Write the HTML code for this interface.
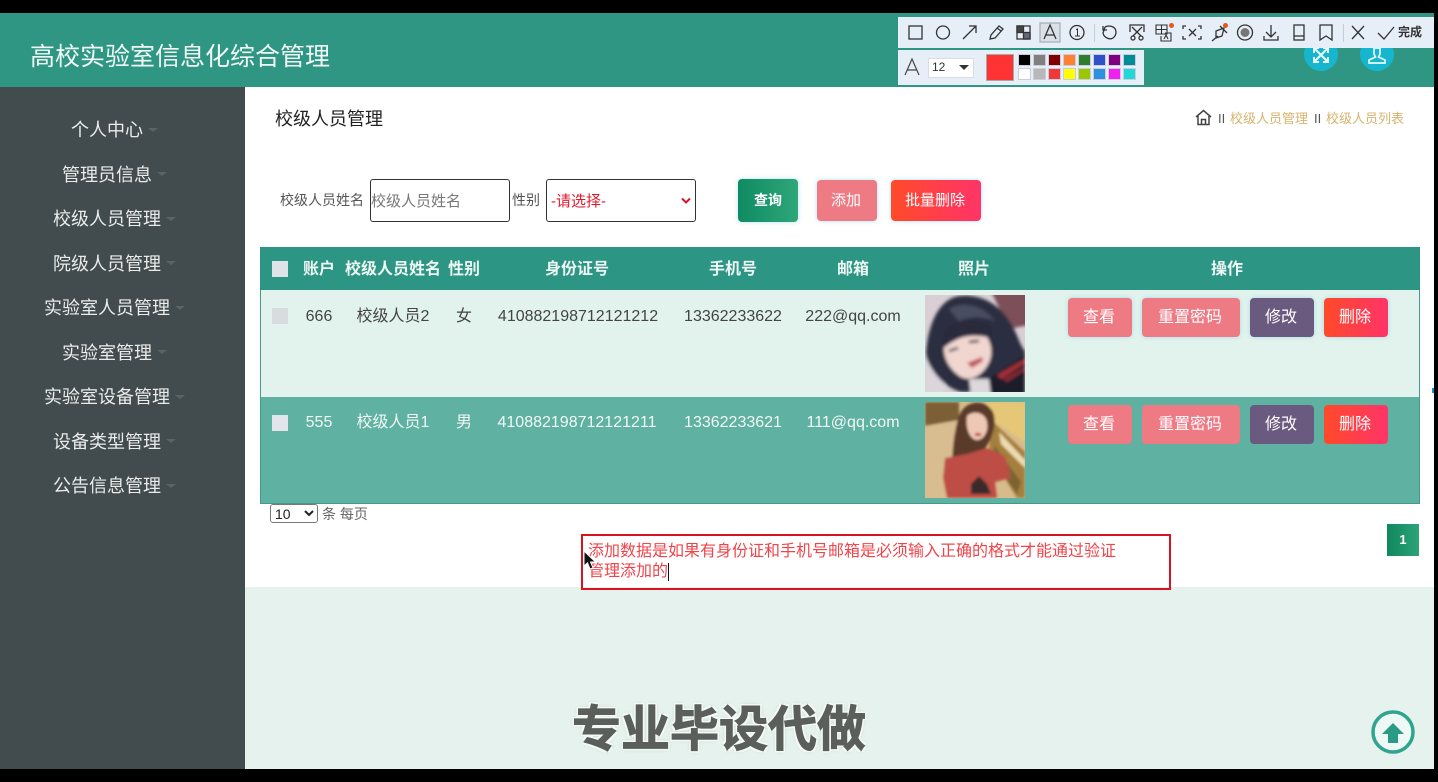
<!DOCTYPE html>
<html lang="zh">
<head>
<meta charset="utf-8">
<title>高校实验室信息化综合管理</title>
<style>
html{background:#000}
html,body{margin:0;padding:0;width:1438px;height:782px;overflow:hidden}
body{position:relative;background:#000;font-family:"Liberation Sans","Noto Sans CJK SC",sans-serif;filter:blur(.35px)}
.a{position:absolute;display:block}
.t{position:absolute;white-space:nowrap;text-align:center;transform:translateX(-50%)}
.l{position:absolute;white-space:nowrap}
.menu{font-size:18px;color:#e9ecea;line-height:24px}
.car{position:absolute;width:0;height:0;border-left:5px solid transparent;border-right:5px solid transparent;border-top:4px solid #5a6366}
.th{font-size:16px;font-weight:bold;color:#eef7f4;line-height:22px;top:259px}
.d1{font-size:16px;color:#444;line-height:22px;top:306px}
.d2{font-size:16px;color:#f2f8f6;line-height:22px;top:412px}
.btn{position:absolute;height:39px;box-sizing:border-box;padding-right:2px;border-radius:4px;color:#fff;font-size:16px;line-height:40px;text-align:center;box-shadow:0 0 5px rgba(120,200,230,.55)}
.pk{background:#ee7a84}.pu{background:#6b5a80}.re{background:linear-gradient(90deg,#ff4a2a,#ff3468)}
.sw{position:absolute;width:13px;height:12px;box-sizing:border-box;border:1px solid #ccd}
</style>
</head>
<body>
<div class="a" style="left:0;top:13px;width:1434px;height:756px;background:#e5f2ed"></div>
<div class="a" style="left:0;top:13px;width:1434px;height:74px;background:#2e9683"></div>
<div class="l" style="left:30px;top:40px;font-size:25px;line-height:34px;color:#f1f8f6">高校实验室信息化综合管理</div>

<div class="a" style="left:0;top:87px;width:245px;height:682px;background:#424b4e"></div>
<div class="a" style="left:245px;top:87px;width:1189px;height:500px;background:#fff"></div>

<div class="t menu" style="left:107px;top:118px">个人中心</div><i class="car" style="left:148px;top:128px"></i>
<div class="t menu" style="left:107px;top:163px">管理员信息</div><i class="car" style="left:157px;top:172px"></i>
<div class="t menu" style="left:107px;top:207px">校级人员管理</div><i class="car" style="left:166px;top:217px"></i>
<div class="t menu" style="left:107px;top:252px">院级人员管理</div><i class="car" style="left:166px;top:261px"></i>
<div class="t menu" style="left:107px;top:296px">实验室人员管理</div><i class="car" style="left:175px;top:306px"></i>
<div class="t menu" style="left:107px;top:341px">实验室管理</div><i class="car" style="left:157px;top:350px"></i>
<div class="t menu" style="left:107px;top:385px">实验室设备管理</div><i class="car" style="left:175px;top:395px"></i>
<div class="t menu" style="left:107px;top:430px">设备类型管理</div><i class="car" style="left:166px;top:439px"></i>
<div class="t menu" style="left:107px;top:474px">公告信息管理</div><i class="car" style="left:166px;top:484px"></i>

<div class="l" style="left:275px;top:107px;font-size:18px;line-height:24px;color:#222">校级人员管理</div>

<svg class="a" style="left:1195px;top:109px" width="17" height="17" viewBox="0 0 17 17" fill="none" stroke="#444" stroke-width="1.500"><path d="M1 8 8.500 1.500 16 8M3 7V15.500H14V7M6.500 15.500V10.500H10.500V15.500"/></svg>
<div class="l" style="left:1218px;top:110px;font-size:13px;line-height:17px;color:#555">II</div>
<div class="l" style="left:1230px;top:110px;font-size:13px;line-height:17px;color:#d8b36c">校级人员管理</div>
<div class="l" style="left:1314px;top:110px;font-size:13px;line-height:17px;color:#555">II</div>
<div class="l" style="left:1326px;top:110px;font-size:13px;line-height:17px;color:#d8b36c">校级人员列表</div>

<div class="l" style="left:280px;top:190px;font-size:14px;line-height:20px;color:#555">校级人员姓名</div>
<div class="a" style="left:370px;top:179px;width:140px;height:43px;box-sizing:border-box;border:1px solid #333;border-radius:3px;background:#fff"></div>
<div class="l" style="left:371px;top:191px;font-size:15px;line-height:21px;color:#777">校级人员姓名</div>
<div class="l" style="left:512px;top:190px;font-size:14px;line-height:20px;color:#555">性别</div>
<div class="a" style="left:546px;top:179px;width:150px;height:43px;box-sizing:border-box;border:1px solid #333;border-radius:3px;background:#fff"></div>
<div class="l" style="left:551px;top:191px;font-size:15px;line-height:21px;color:#e3192c">-请选择-</div>
<svg class="a" style="left:681px;top:197px" width="10" height="8" viewBox="0 0 10 8" fill="none" stroke="#d81525" stroke-width="2"><path d="M1 1.500 5 5.500 9 1.500"/></svg>

<div class="btn" style="left:738px;top:179px;width:60px;height:43px;line-height:43px;font-size:14px;font-weight:bold;padding:0;background:linear-gradient(90deg,#0f8a62,#2ea779)">查询</div>
<div class="btn" style="left:817px;top:180px;width:60px;height:41px;line-height:41px;font-size:15px;padding-right:2px;background:#ee7a84">添加</div>
<div class="btn" style="left:891px;top:180px;width:90px;height:41px;line-height:41px;font-size:15px;padding-right:2px;background:linear-gradient(90deg,#ff4a2a,#ff3468)">批量删除</div>

<!-- table -->
<div class="a" style="left:260px;top:247px;width:1160px;height:43px;background:#2d9583"></div>
<div class="a" style="left:260px;top:290px;width:1160px;height:107px;box-sizing:border-box;background:#e2f3ed;border:1px solid #3d9c8a;border-top:0;border-bottom:0"></div>
<div class="a" style="left:260px;top:397px;width:1160px;height:107px;box-sizing:border-box;background:#5fb1a1;border:1px solid #3d9c8a;border-top:0"></div>

<div class="a" style="left:272px;top:261px;width:16px;height:16px;background:#dfe3e6"></div>
<div class="t th" style="left:319px">账户</div>
<div class="t th" style="left:393px">校级人员姓名</div>
<div class="t th" style="left:464px">性别</div>
<div class="t th" style="left:577px">身份证号</div>
<div class="t th" style="left:733px">手机号</div>
<div class="t th" style="left:853px">邮箱</div>
<div class="t th" style="left:974px">照片</div>
<div class="t th" style="left:1227px">操作</div>

<div class="a" style="left:272px;top:308px;width:16px;height:16px;background:#d8dcdf"></div>
<div class="t d1" style="left:319px">666</div>
<div class="t d1" style="left:393px">校级人员2</div>
<div class="t d1" style="left:464px">女</div>
<div class="t d1" style="left:578px">410882198712121212</div>
<div class="t d1" style="left:733px">13362233622</div>
<div class="t d1" style="left:853px">222@qq.com</div>

<div class="a" style="left:272px;top:415px;width:16px;height:16px;background:#e2e6e8"></div>
<div class="t d2" style="left:319px">555</div>
<div class="t d2" style="left:393px">校级人员1</div>
<div class="t d2" style="left:464px">男</div>
<div class="t d2" style="left:577px">410882198712121211</div>
<div class="t d2" style="left:733px">13362233621</div>
<div class="t d2" style="left:853px">111@qq.com</div>

<!-- photo 1 -->
<svg class="a" style="left:925px;top:295px" width="100" height="97" viewBox="0 0 100 97">
<defs><filter id="b1" x="-10%" y="-10%" width="120%" height="120%"><feGaussianBlur stdDeviation="1.500"/></filter><clipPath id="c1"><rect width="100" height="97"/></clipPath></defs>
<g clip-path="url(#c1)">
<rect width="100" height="97" fill="#d9cfd4"/>
<g filter="url(#b1)">
<path d="M66 -4H104V30L84 34Z" fill="#7d5058"/>
<path d="M0 60H20V100H0Z" fill="#dcd6dc"/>
<path d="M1 62C2 30 14 4 34 1 58-2 78 12 88 32 94 44 96 52 100 56V70L74 90 56 97H36C20 92 8 80 1 62Z" fill="#2b2e40"/>
<path d="M24 14C38 6 58 10 70 26 62 22 46 20 34 26Z" fill="#4a4d62"/>
<path d="M60 97 63 84 100 60V100H60Z" fill="#1d1e29"/>
<path d="M72 80 100 64V68L76 84Z" fill="#a83038"/>
<path d="M78 84 100 72V75L82 87Z" fill="#8a2a32"/>
<path d="M44 84H64L66 100H46Z" fill="#ddd8dc"/>
<path d="M19 52C26 44 44 38 62 42 68 52 68 64 60 74 54 82 44 86 36 82 26 76 18 64 19 52Z" fill="#f1d6d0"/>
<path d="M17 54 19 36C30 24 50 22 64 30 68 34 68 40 66 44 52 36 34 40 17 54Z" fill="#2a2c3c"/>
<path d="M42 68 57 62 58 66 47 73Z" fill="#c2555e"/>
<path d="M24 56l9-3M44 47l10-1" stroke="#2c2c34" stroke-width="2.400" fill="none"/>
</g></g></svg>
<!-- photo 2 -->
<svg class="a" style="left:925px;top:402px" width="100" height="96" viewBox="0 0 100 96">
<defs><filter id="b2" x="-10%" y="-10%" width="120%" height="120%"><feGaussianBlur stdDeviation="1.400"/></filter><clipPath id="c2"><rect width="100" height="96"/></clipPath></defs>
<g clip-path="url(#c2)">
<rect width="100" height="96" fill="#d7bb8a"/>
<g filter="url(#b2)">
<path d="M0 0H34V18L0 24Z" fill="#7c5f36"/>
<path d="M0 24 36 18V96H0Z" fill="#d8bd90"/>
<path d="M62 0H100V40L70 20Z" fill="#e6c778"/>
<path d="M66 18 100 50V96H92L64 50Z" fill="#a57f3e"/>
<path d="M74 30 100 58V66L76 42Z" fill="#ecdcb0"/>
<path d="M70 44 96 80 92 92 66 56Z" fill="#7d6433"/>
<path d="M34 14C40-2 60-4 68 10 72 20 68 32 64 40L58 50 36 78 28 76C26 58 28 32 34 14Z" fill="#5a3a2a"/>
<path d="M42 14C48 8 60 10 62 20 64 30 58 38 52 38 46 38 40 28 42 14Z" fill="#eec8b4"/>
<path d="M50 31h6v3h-6z" fill="#c13c3c"/>
<path d="M20 56 42 52 62 46 80 54 86 76 70 80 72 96H22L18 76Z" fill="#bd4e44"/>
<path d="M46 82 54 74 62 82 66 92H46Z" fill="#3b2b29"/>
</g></g></svg>

<!-- action buttons -->
<div class="btn pk" style="left:1068px;top:298px;width:64px">查看</div>
<div class="btn pk" style="left:1142px;top:298px;width:98px">重置密码</div>
<div class="btn pu" style="left:1250px;top:298px;width:64px">修改</div>
<div class="btn re" style="left:1324px;top:298px;width:64px">删除</div>
<div class="btn pk" style="left:1068px;top:405px;width:64px;box-shadow:none">查看</div>
<div class="btn pk" style="left:1142px;top:405px;width:98px;box-shadow:none">重置密码</div>
<div class="btn pu" style="left:1250px;top:405px;width:64px;box-shadow:none">修改</div>
<div class="btn re" style="left:1324px;top:405px;width:64px;box-shadow:none">删除</div>

<!-- page size -->
<div class="a" style="left:270px;top:504px;width:48px;height:19px;box-sizing:border-box;border:1px solid #777;border-radius:3px;background:#fff"></div>
<div class="l" style="left:275px;top:505px;font-size:14px;line-height:18px;color:#222">10</div>
<svg class="a" style="left:304px;top:510px" width="10" height="7" viewBox="0 0 10 7" fill="none" stroke="#222" stroke-width="2"><path d="M1 1 5 5 9 1"/></svg>
<div class="l" style="left:322px;top:505px;font-size:14px;line-height:18px;color:#666">条 每页</div>

<div class="a" style="left:1387px;top:524px;width:32px;height:32px;background:linear-gradient(90deg,#11875f,#2ca377)"></div>
<div class="t" style="left:1403px;top:532px;font-size:13px;font-weight:bold;line-height:16px;color:#fff">1</div>

<!-- annotation -->
<div class="a" style="left:581px;top:534px;width:590px;height:56px;box-sizing:border-box;border:2px solid #d8131f"></div>
<div class="l" style="left:588px;top:542px;font-size:16px;line-height:20px;color:#f0444a">添加数据是如果有身份证和手机号邮箱是必须输入正确的格式才能通过验证<br>管理添加的</div>
<div class="a" style="left:668px;top:563px;width:1px;height:18px;background:#111"></div>
<svg class="a" style="left:583px;top:550px" width="14" height="21" viewBox="0 0 14 21"><path d="M1 1V16L4.500 12.800 7 19 10 17.800 7.500 12H12.500Z" fill="#111" stroke="#fff" stroke-width="1"/></svg>

<!-- top right circles -->
<div class="a" style="left:1304px;top:37px;width:34px;height:34px;border-radius:50%;background:#17b6cf"></div>
<svg class="a" style="left:1312px;top:46px" width="18" height="18" viewBox="0 0 18 18" fill="none" stroke="#e8fafc" stroke-width="2"><path d="M2 2 16 16M16 2 2 16M2 7V2H7M11 2H16V7M2 11V16H7M11 16H16V11"/></svg>
<div class="a" style="left:1360px;top:37px;width:34px;height:34px;border-radius:50%;background:#17b6cf"></div>
<svg class="a" style="left:1367px;top:46px" width="20" height="19" viewBox="0 0 20 19" fill="none" stroke="#e8fafc" stroke-width="1.700"><path d="M7 2H13V8L11.500 11 18 14V17H2V14L8.500 11 7 8Z"/></svg>

<!-- screenshot toolbar -->
<div class="a" style="left:898px;top:17px;width:536px;height:31px;background:#e6eff8"></div>
<div class="a" style="left:898px;top:50px;width:246px;height:35px;background:#e6eff8"></div>
<svg class="a" style="left:898px;top:17px" width="536" height="31" viewBox="898 17 536 31" fill="none" stroke="#333" stroke-width="1.300">
<rect x="909" y="26" width="13" height="13"/>
<circle cx="943" cy="32.500" r="6.500"/>
<path d="M963 39 976 26M969 26H976V33"/>
<path d="M990 39 991 35 999 26 1003 29 995 38ZM997 28 1001 31"/>
<rect x="1017" y="26" width="13" height="13"/><rect x="1017" y="26" width="6.500" height="6.500" fill="#444"/><rect x="1023.500" y="32.500" width="6.500" height="6.500" fill="#667"/>
<rect x="1040" y="23" width="20" height="19" fill="#d9e1e8" stroke="#a8b0b8"/>
<path d="M1044 39 1050 25 1056 39M1046 35H1054"/>
<circle cx="1077" cy="32.500" r="7"/><path d="M1076 29.500 1077.500 29V36M1075 36H1080" stroke-width="1"/>
<path d="M1094.500 24V42" stroke="#c4ccd4" stroke-width="1"/>
<path d="M1105 27 1103 33C1104 38 1110 40 1113 38 1117 35 1117 29 1113 27 1110 25.500 1107 26 1105 27M1103 26V30H1107"/>
<path d="M1144 32V25H1130V32M1132 27 1141 36M1142 27 1133 36"/><circle cx="1133" cy="38" r="2"/><circle cx="1141" cy="38" r="2"/>
<path d="M1156 25H1167V34H1156ZM1161.500 25V34M1156 29.500H1167M1165 33H1171V41H1161V36M1164 39 1166 35 1168 39" stroke-width="1.100"/>
<path d="M1186 26H1183V29M1198 26H1201V29M1186 39H1183V36M1198 39H1201V36M1189 29 1196 36M1196 29 1189 36"/>
<path d="M1220 26 1227 33M1218 36 1212 41M1216 31 1224 28 1222 36 1216 38Z"/>
<circle cx="1245" cy="32.500" r="7.500"/><circle cx="1245" cy="32.500" r="4.500" fill="#777" stroke="none"/>
<path d="M1271 25V37M1266 32 1271 37 1276 32M1264 36V40H1278V36"/>
<rect x="1294" y="25" width="10" height="15"/><path d="M1294 36H1304"/>
<path d="M1320 25H1332V40L1326 36 1320 40Z"/>
<path d="M1343.500 24V42" stroke="#c4ccd4" stroke-width="1"/>
<path d="M1352 26 1364 39M1364 26 1352 39"/>
<path d="M1378 33 1384 39 1394 27"/>
</svg>
<i class="a" style="left:1169px;top:23px;width:5px;height:5px;border-radius:50%;background:#e0591f"></i>
<i class="a" style="left:1223px;top:23px;width:5px;height:5px;border-radius:50%;background:#e0591f"></i>
<div class="l" style="left:1398px;top:25px;font-size:12px;font-weight:bold;line-height:14px;color:#333">完成</div>

<svg class="a" style="left:903px;top:58px" width="18" height="18" viewBox="0 0 18 18" fill="none" stroke="#444" stroke-width="1.200"><path d="M2 17 9 1 16 17M4.500 12H13.500"/></svg>
<div class="a" style="left:928px;top:58px;width:46px;height:20px;box-sizing:border-box;background:#fff;border:1px solid #d8dde2"></div>
<div class="l" style="left:932px;top:59px;font-size:12px;line-height:16px;color:#333">12</div>
<div class="a" style="left:959px;top:65px;width:0;height:0;border-left:5px solid transparent;border-right:5px solid transparent;border-top:5px solid #333"></div>
<div class="a" style="left:986px;top:54px;width:28px;height:27px;box-sizing:border-box;background:#ff3333;border:1px solid #a8a8a8"></div>

<i class="sw" style="left:1018px;top:54px;background:#000"></i>
<i class="sw" style="left:1033px;top:54px;background:#808080"></i>
<i class="sw" style="left:1048px;top:54px;background:#800000"></i>
<i class="sw" style="left:1063px;top:54px;background:#ff8033"></i>
<i class="sw" style="left:1078px;top:54px;background:#2d7d2d"></i>
<i class="sw" style="left:1093px;top:54px;background:#3050c8"></i>
<i class="sw" style="left:1108px;top:54px;background:#800080"></i>
<i class="sw" style="left:1123px;top:54px;background:#008c96"></i>
<i class="sw" style="left:1018px;top:68px;background:#fff"></i>
<i class="sw" style="left:1033px;top:68px;background:#b8b8b8"></i>
<i class="sw" style="left:1048px;top:68px;background:#f03838"></i>
<i class="sw" style="left:1063px;top:68px;background:#ffff00"></i>
<i class="sw" style="left:1078px;top:68px;background:#9ac800"></i>
<i class="sw" style="left:1093px;top:68px;background:#3090e0"></i>
<i class="sw" style="left:1108px;top:68px;background:#f020f0"></i>
<i class="sw" style="left:1123px;top:68px;background:#20d8d8"></i>

<!-- watermark -->
<div class="l" style="left:572px;top:700px;font-size:49px;font-weight:bold;line-height:60px;color:#5a5f5c;-webkit-text-stroke:1px #5a5f5c;text-shadow:-2px -2px 0 #f4f8f6,2px -2px 0 #f4f8f6,-2px 2px 0 #f4f8f6,2px 2px 0 #f4f8f6,0 0 4px #9aa">专业毕设代做</div>

<!-- back to top -->
<svg class="a" style="left:1370px;top:709px" width="46" height="46" viewBox="0 0 46 46"><circle cx="23" cy="23" r="20" fill="#eef8f5" stroke="#2fa58f" stroke-width="3.500"/><path d="M23 14 34 25H28V34H18V25H12Z" fill="#2a9c86"/></svg>

<!-- frame -->
<div class="a" style="left:0;top:0;width:1438px;height:13px;background:#000"></div>
<div class="a" style="left:0;top:769px;width:1438px;height:13px;background:#000"></div>
<div class="a" style="left:1434px;top:0;width:4px;height:782px;background:#000"></div>
<div class="a" style="left:1432px;top:388px;width:2px;height:5px;background:#1a8fd0"></div>
</body>
</html>
